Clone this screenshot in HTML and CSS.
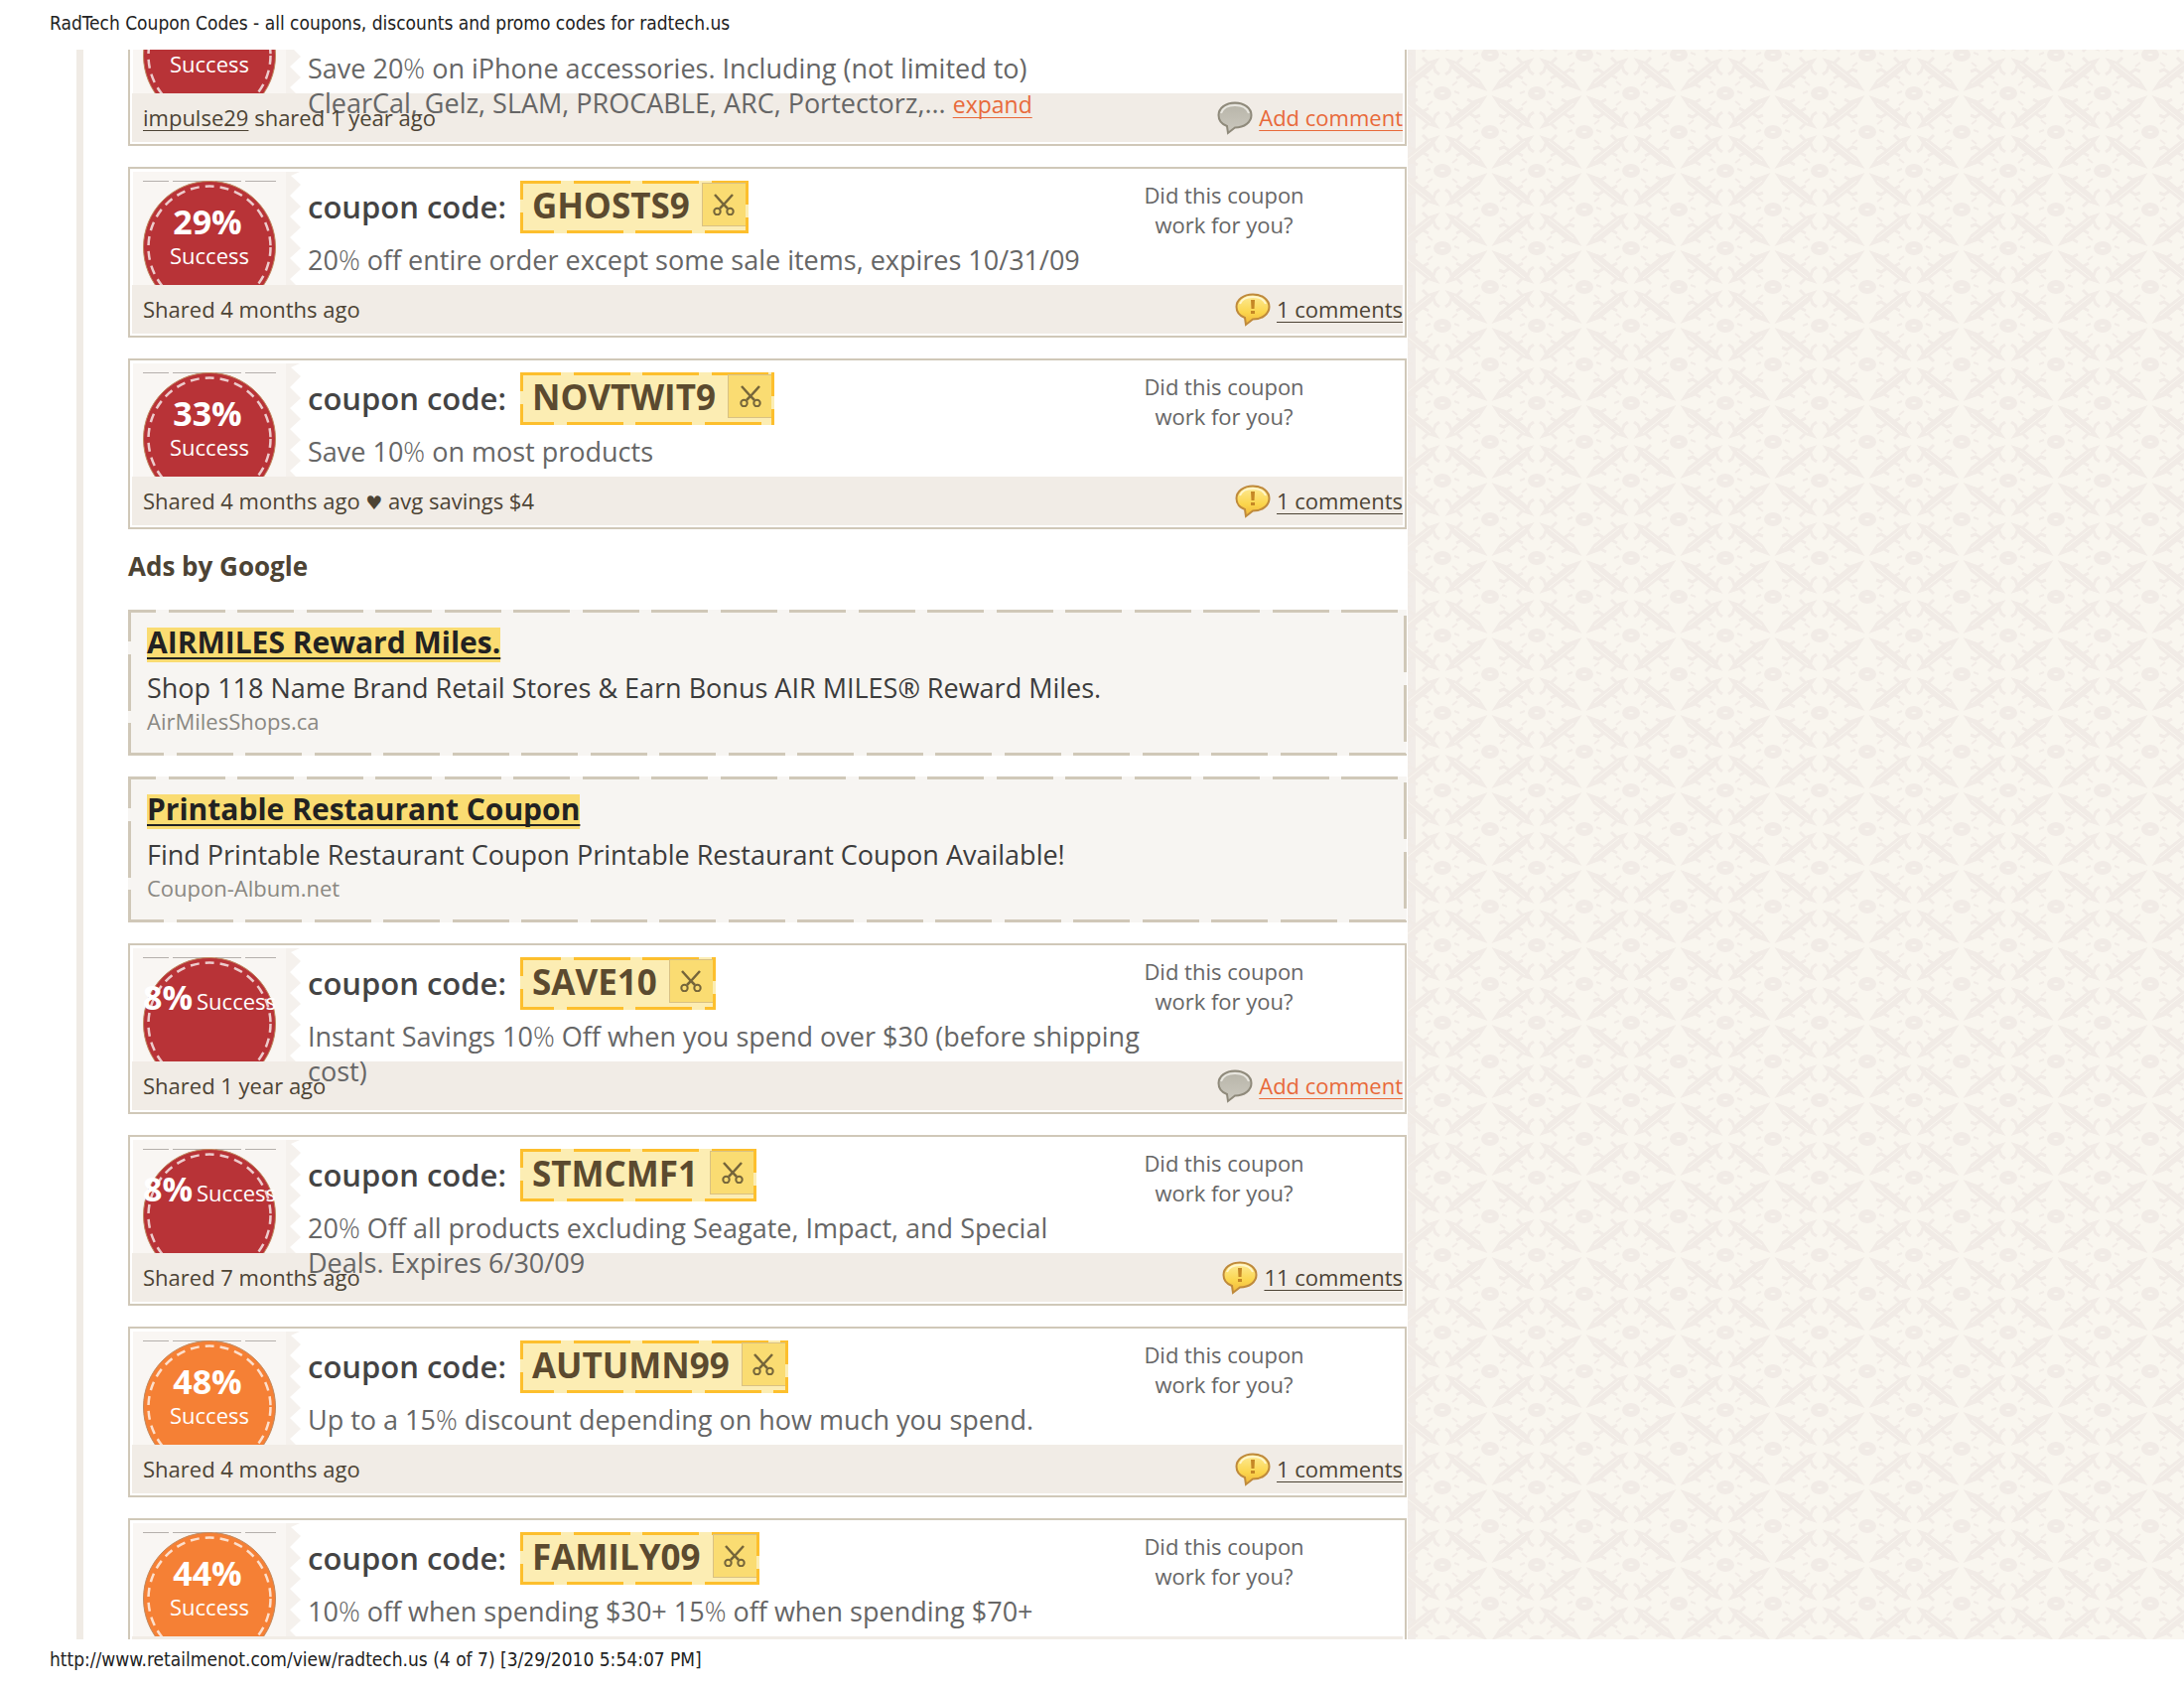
FILE: index.html
```html
<!DOCTYPE html>
<html lang="en">
<head>
    <meta charset="UTF-8">
    <meta name="viewport" content="width=device-width, initial-scale=1.0">
    <title>RadTech Coupon Codes - all coupons, discounts and promo codes for radtech.us</title>
    <link rel="stylesheet" href="styles.css">
</head>
<body>
    <!-- Shared shapes -->
    <svg class="defs" width="0" height="0" aria-hidden="true">
        <defs>
            <linearGradient id="goldFill" x1="0" y1="0" x2="0" y2="1">
                <stop offset="0" stop-color="#fdeb98"/>
                <stop offset="0.6" stop-color="#fbd54c"/>
                <stop offset="1" stop-color="#f0b53a"/>
            </linearGradient>
            <linearGradient id="greyFill" x1="0" y1="0" x2="0" y2="1">
                <stop offset="0" stop-color="#b7b4a8"/>
                <stop offset="1" stop-color="#cbc8be"/>
            </linearGradient>
            <symbol id="seal" viewBox="0 0 170 114">
                <path fill="#f9f6f3" d="M0 0H158V114H0Z"/>
                <path fill="#f5f1ed" d="M158 0H168L159 4L169 13L158 24L169 35L158 45L169 56L158 66L169 77L158 87L169 98L158 108L164 114H154V0Z"/>
                <path stroke="#b5b0ac" d="M10 9.500H144" stroke-dasharray="26 4 40 3"/>
                <circle cx="77" cy="76" r="66.500" fill="currentColor" stroke="#c08a60" stroke-width="1"/>
                <circle cx="77" cy="76" r="61.500" fill="none" stroke="#fff" stroke-opacity="0.75" stroke-width="2.500" stroke-dasharray="9 6"/>
            </symbol>
            <symbol id="scissors" viewBox="0 0 22 22">
                <g fill="none" stroke="#75653a" stroke-width="2">
                    <circle cx="4.500" cy="18" r="3.200"/>
                    <circle cx="17.500" cy="18" r="3.200"/>
                    <path d="M7 15L11 11L20 1M15 15L11 11L2 1" stroke-width="2.500"/>
                </g>
            </symbol>
            <symbol id="bubbleGold" viewBox="0 0 36 34">
                <path d="M18 1.500C27.500 1.500 34.500 7 34.500 14C34.500 21 27.500 26.500 18 26.500L11 32L10 25C4.500 23 1.500 19 1.500 14C1.500 7 8.500 1.500 18 1.500Z" fill="url(#goldFill)" stroke="#bf8a3c" stroke-width="2"/>
                <path d="M5 11C7 6 12 4 18 4S29 6 31 11" fill="none" stroke="#fff6cc" stroke-width="2"/>
                <path d="M16 7H20L19.500 16H16.500ZM16 18H20V21H16Z" fill="#c58726"/>
            </symbol>
            <symbol id="bubbleGrey" viewBox="0 0 36 34">
                <path d="M18 1.500C27.500 1.500 34.500 7 34.500 14C34.500 21 27.500 26.500 18 26.500L11 32L10 25C4.500 23 1.500 19 1.500 14C1.500 7 8.500 1.500 18 1.500Z" fill="url(#greyFill)" stroke="#8f8a7b" stroke-width="2"/>
                <path d="M4 12C6 6 12 4 18 4S30 6 32 12" fill="none" stroke="#e9e7e0" stroke-width="2"/>
            </symbol>
            <g id="leaf">
                <path fill="#f1ebe6" stroke="#f1ebe6" stroke-width="2" d="M52 5L61 8L84 26L90 35L79 31L59 15Z"/>
                <path fill="none" stroke="#f1ebe6" stroke-width="3" d="M57 9L54 17L50 20M61 9L67 3M68 20L61 24M74 19L80 15L85 17M79 29L72 33"/>
                <path stroke="#f9f6ef" stroke-width="1" d="M59 9L84 29"/>
            </g>
            <g id="eye" fill="none" stroke="#f1ebe6">
                <ellipse rx="6" ry="4" stroke-width="6"/>
                <path stroke-width="2" d="M-17 0L-12 -2M17 0L12 -2M-15 12L-10 8M15 12L10 8M-15 -12L-10 -8M15 -12L10 -8"/>
            </g>
            <pattern id="damask" x="-12" y="5" width="95" height="78" patternUnits="userSpaceOnUse">
                <use href="#leaf"/>
                <use href="#leaf" transform="translate(94 0) scale(-1 1)"/>
                <use href="#leaf" transform="translate(0 78) scale(1 -1)"/>
                <use href="#leaf" transform="translate(94 78) scale(-1 -1)"/>
                <use href="#eye" x="47" y="39"/>
                <use href="#eye" x="0" y="0"/>
                <use href="#eye" x="95" y="0"/>
                <use href="#eye" x="0" y="78"/>
                <use href="#eye" x="95" y="78"/>
            </pattern>
        </defs>
    </svg>

    <header class="print-line print-title">RadTech Coupon Codes - all coupons, discounts and promo codes for radtech.us</header>

    <div class="page">
        <main class="coupons">
            <article class="card">
                <div class="offer">
                    <div class="badge red">
                        <svg class="seal"><use href="#seal"/></svg>
                        <div class="stat"><span>Success</span></div>
                    </div>
                    <div class="details">
                        <div class="code-row"></div>
                        <p class="text">Save 20<span class="pct">%</span> on iPhone accessories. Including (not limited to)<br>ClearCal, Gelz, SLAM, PROCABLE, ARC, Portectorz,... <a class="hot" href="#">expand</a></p>
                    </div>
                </div>
                <footer class="meta">
                    <span class="shared"><a href="#">impulse29</a> shared 1 year ago</span>
                    <span class="comments"><svg><use href="#bubbleGrey"/></svg><a class="hot" href="#">Add comment</a></span>
                </footer>
            </article>

            <article class="card">
                <div class="offer">
                    <div class="badge red">
                        <svg class="seal"><use href="#seal"/></svg>
                        <div class="stat"><strong>29%</strong> <span>Success</span></div>
                    </div>
                    <div class="details">
                        <div class="code-row">
                            <h2>coupon code:</h2>
                            <div class="code stitched">GHOSTS9<button type="button" aria-label="Copy code"><svg><use href="#scissors"/></svg></button></div>
                        </div>
                        <p class="text">20<span class="pct">%</span> off entire order except some sale items, expires 10/31/09</p>
                    </div>
                    <p class="vote">Did this coupon<br>work for you?</p>
                </div>
                <footer class="meta">
                    <span class="shared">Shared 4 months ago</span>
                    <span class="comments"><svg><use href="#bubbleGold"/></svg><a href="#">1 comments</a></span>
                </footer>
            </article>

            <article class="card">
                <div class="offer">
                    <div class="badge red">
                        <svg class="seal"><use href="#seal"/></svg>
                        <div class="stat"><strong>33%</strong> <span>Success</span></div>
                    </div>
                    <div class="details">
                        <div class="code-row">
                            <h2>coupon code:</h2>
                            <div class="code stitched">NOVTWIT9<button type="button" aria-label="Copy code"><svg><use href="#scissors"/></svg></button></div>
                        </div>
                        <p class="text">Save 10<span class="pct">%</span> on most products</p>
                    </div>
                    <p class="vote">Did this coupon<br>work for you?</p>
                </div>
                <footer class="meta">
                    <span class="shared">Shared 4 months ago <span class="heart">♥</span> avg savings $4</span>
                    <span class="comments"><svg><use href="#bubbleGold"/></svg><a href="#">1 comments</a></span>
                </footer>
            </article>

            <h3 class="ads-title">Ads by Google</h3>

            <section class="ad stitched">
                <a class="ad-link" href="#">AIRMILES Reward Miles.</a>
                <p class="ad-text">Shop 118 Name Brand Retail Stores &amp; Earn Bonus AIR MILES® Reward Miles.</p>
                <p class="ad-url">AirMilesShops.ca</p>
            </section>

            <section class="ad stitched">
                <a class="ad-link" href="#">Printable Restaurant Coupon</a>
                <p class="ad-text">Find Printable Restaurant Coupon Printable Restaurant Coupon Available!</p>
                <p class="ad-url">Coupon-Album.net</p>
            </section>

            <article class="card">
                <div class="offer">
                    <div class="badge red">
                        <svg class="seal"><use href="#seal"/></svg>
                        <div class="stat inline"><strong>8%</strong> <span>Success</span></div>
                    </div>
                    <div class="details">
                        <div class="code-row">
                            <h2>coupon code:</h2>
                            <div class="code stitched">SAVE10<button type="button" aria-label="Copy code"><svg><use href="#scissors"/></svg></button></div>
                        </div>
                        <p class="text">Instant Savings 10<span class="pct">%</span> Off when you spend over $30 (before shipping<br>cost)</p>
                    </div>
                    <p class="vote">Did this coupon<br>work for you?</p>
                </div>
                <footer class="meta">
                    <span class="shared">Shared 1 year ago</span>
                    <span class="comments"><svg><use href="#bubbleGrey"/></svg><a class="hot" href="#">Add comment</a></span>
                </footer>
            </article>

            <article class="card">
                <div class="offer">
                    <div class="badge red">
                        <svg class="seal"><use href="#seal"/></svg>
                        <div class="stat inline"><strong>8%</strong> <span>Success</span></div>
                    </div>
                    <div class="details">
                        <div class="code-row">
                            <h2>coupon code:</h2>
                            <div class="code stitched">STMCMF1<button type="button" aria-label="Copy code"><svg><use href="#scissors"/></svg></button></div>
                        </div>
                        <p class="text">20<span class="pct">%</span> Off all products excluding Seagate, Impact, and Special<br>Deals. Expires 6/30/09</p>
                    </div>
                    <p class="vote">Did this coupon<br>work for you?</p>
                </div>
                <footer class="meta">
                    <span class="shared">Shared 7 months ago</span>
                    <span class="comments"><svg><use href="#bubbleGold"/></svg><a href="#">11 comments</a></span>
                </footer>
            </article>

            <article class="card">
                <div class="offer">
                    <div class="badge orange">
                        <svg class="seal"><use href="#seal"/></svg>
                        <div class="stat"><strong>48%</strong> <span>Success</span></div>
                    </div>
                    <div class="details">
                        <div class="code-row">
                            <h2>coupon code:</h2>
                            <div class="code stitched">AUTUMN99<button type="button" aria-label="Copy code"><svg><use href="#scissors"/></svg></button></div>
                        </div>
                        <p class="text">Up to a 15<span class="pct">%</span> discount depending on how much you spend.</p>
                    </div>
                    <p class="vote">Did this coupon<br>work for you?</p>
                </div>
                <footer class="meta">
                    <span class="shared">Shared 4 months ago</span>
                    <span class="comments"><svg><use href="#bubbleGold"/></svg><a href="#">1 comments</a></span>
                </footer>
            </article>

            <article class="card">
                <div class="offer">
                    <div class="badge orange">
                        <svg class="seal"><use href="#seal"/></svg>
                        <div class="stat"><strong>44%</strong> <span>Success</span></div>
                    </div>
                    <div class="details">
                        <div class="code-row">
                            <h2>coupon code:</h2>
                            <div class="code stitched">FAMILY09<button type="button" aria-label="Copy code"><svg><use href="#scissors"/></svg></button></div>
                        </div>
                        <p class="text">10<span class="pct">%</span> off when spending $30+ 15<span class="pct">%</span> off when spending $70+</p>
                    </div>
                    <p class="vote">Did this coupon<br>work for you?</p>
                </div>
                <footer class="meta"></footer>
            </article>
        </main>

        <aside class="wallpaper">
            <svg width="100%" height="100%" aria-hidden="true"><rect width="100%" height="100%" fill="url(#damask)"/></svg>
        </aside>
    </div>

    <footer class="print-line print-url">http://www.retailmenot.com/view/radtech.us (4 of 7) [3/29/2010 5:54:07 PM]</footer>
</body>
</html>
```
FILE: styles.css
```css
* {
    box-sizing: border-box;
}
body {
    font-family: "Open Sans", "Trebuchet MS", sans-serif;
    font-size: 27px;
    line-height: 35px;
    color: #4c4334;
    background-color: #fff;
    margin: 0;
    display: flex;
    flex-direction: column;
    height: 100vh;
    overflow: hidden;
}
h2, h3, p {
    margin: 0;
}
a {
    color: inherit;
    text-decoration-thickness: 1px;
    text-underline-offset: 4px;
    text-decoration-skip-ink: none;
}
.hot {
    color: #e8693a;
}
.defs {
    position: absolute;
}

/* Printed header and footer lines */
.print-line {
    font-family: "DejaVu Sans Condensed", Tahoma, sans-serif;
    font-size: 19px;
    color: #222;
    padding-left: 50px;
    flex: none;
}
.print-title {
    line-height: 47px;
    height: 50px;
}
.print-url {
    line-height: 41px;
    height: 49px;
}

.page {
    flex: 1;
    min-height: 0;
    overflow: hidden;
    display: grid;
    grid-template-columns: minmax(0, 1341fr) minmax(0, 782fr);
    padding-left: 77px;
}
.coupons {
    display: flex;
    flex-direction: column;
    gap: 21px;
    border-left: 7px solid #f0ebe5;
    padding: 0 1px 0 45px;
    margin-top: -75px;
}
.wallpaper {
    position: relative;
    background-color: #f9f6ef;
    border-left: 8px solid #f1ece8;
}
.wallpaper svg {
    position: absolute;
    top: 0;
    left: -8px;
    width: calc(100% + 8px);
}

/* Coupon card */
.card {
    border: 2px solid #d0c8b8;
    padding: 2px;
}
.offer {
    display: flex;
    height: 115px;
}
.badge {
    position: relative;
    width: 177px;
    flex: none;
    overflow: hidden;
    padding: 1px 0 0 1px;
}
.red {
    color: #b83337;
}
.orange {
    color: #f58035;
}
.seal {
    display: block;
    width: 170px;
    height: 114px;
}
/* Success rate printed over the seal */
.stat {
    position: absolute;
    top: 33px;
    left: 11px;
    width: 134px;
    height: 82px;
    overflow: hidden;
    color: #fff;
    font-size: 22px;
    line-height: 35px;
    text-align: center;
    display: flex;
    flex-direction: column;
    justify-content: flex-end;
    padding-bottom: 12px;
}
.stat strong {
    font-size: 34px;
    line-height: 34px;
    padding-right: 4px;
}
.stat.inline {
    flex-direction: row;
    justify-content: flex-end;
    align-items: baseline;
    gap: 4px;
    white-space: nowrap;
}
.stat.inline strong {
    padding: 0;
}
.details {
    flex: 1;
    min-width: 0;
    padding-top: 10px;
}
.code-row {
    display: flex;
    align-items: center;
    gap: 14px;
    height: 53px;
    margin-bottom: 9px;
}
.code-row h2 {
    font-size: 31px;
    font-weight: 600;
    color: #444;
}
.code {
    --stitch: #fdbf2d;
    --top: -16px;
    --right: -33px;
    --bottom: -23px;
    --left: -38px;
    background-color: #fcedb3;
    display: flex;
    align-items: flex-start;
    gap: 12px;
    height: 53px;
    padding: 2px 3px 0 12px;
    font-size: 35px;
    font-weight: 700;
    line-height: 46px;
    color: #5b4a2f;
}
.code button {
    width: 44px;
    height: 44px;
    padding: 0;
    border: 1px solid #d9c183;
    border-right: none;
    background-color: #fadc72;
    display: flex;
    align-items: center;
    justify-content: center;
    cursor: pointer;
}
.code svg {
    width: 22px;
    height: 22px;
}
.text {
    position: relative;
    z-index: 1;
    color: #666;
    white-space: nowrap;
}
.text a {
    font-size: 23px;
}
.pct {
    font-weight: 300;
}
.vote {
    width: 272px;
    flex: none;
    padding: 9px 88px 0 0;
    font-size: 22px;
    line-height: 30px;
    text-align: center;
    color: #666;
}
.meta {
    display: flex;
    justify-content: space-between;
    height: 49px;
    padding-left: 11px;
    background-color: #f1ece6;
    font-size: 22px;
    line-height: 49px;
}
.shared {
    position: relative;
    z-index: 2;
}
.heart {
    font-family: "DejaVu Sans", sans-serif;
    font-size: 19px;
}
.comments {
    display: flex;
    align-items: center;
    gap: 6px;
}
.comments svg {
    width: 36px;
    height: 34px;
}

/* Long-dash border painted on each side */
.stitched {
    --run: var(--stitch) 0 57px, transparent 57px 70px, var(--stitch) 70px 127px, transparent 127px 139px;
    background-image:
        linear-gradient(to right, var(--run)),
        linear-gradient(to bottom, var(--run)),
        linear-gradient(to right, var(--run)),
        linear-gradient(to bottom, var(--run));
    background-size: 139px 3px, 3px 139px, 139px 3px, 3px 139px;
    background-position: var(--top) 0, 100% var(--right), var(--bottom) 100%, 0 var(--left);
    background-repeat: repeat-x, repeat-y, repeat-x, repeat-y;
}

/* Ads */
.ads-title {
    font-size: 26px;
    font-weight: 700;
    line-height: 33px;
    padding-bottom: 6px;
}
.ad {
    --stitch: #d0c8b8;
    --top: -29px;
    --right: 6px;
    --bottom: -21px;
    --left: -25px;
    background-color: #f7f5f2;
    padding: 18px 19px 19px;
}
.ad-link {
    display: block;
    width: fit-content;
    padding-bottom: 6px;
    margin-bottom: 8px;
    background-color: #fadc72;
    font-size: 30px;
    font-weight: 700;
    line-height: 29px;
    color: #222;
    text-decoration-thickness: 2px;
}
.ad-text {
    color: #3c3c3c;
}
.ad-url {
    font-size: 22px;
    line-height: 32px;
    color: #8a8882;
}
```
